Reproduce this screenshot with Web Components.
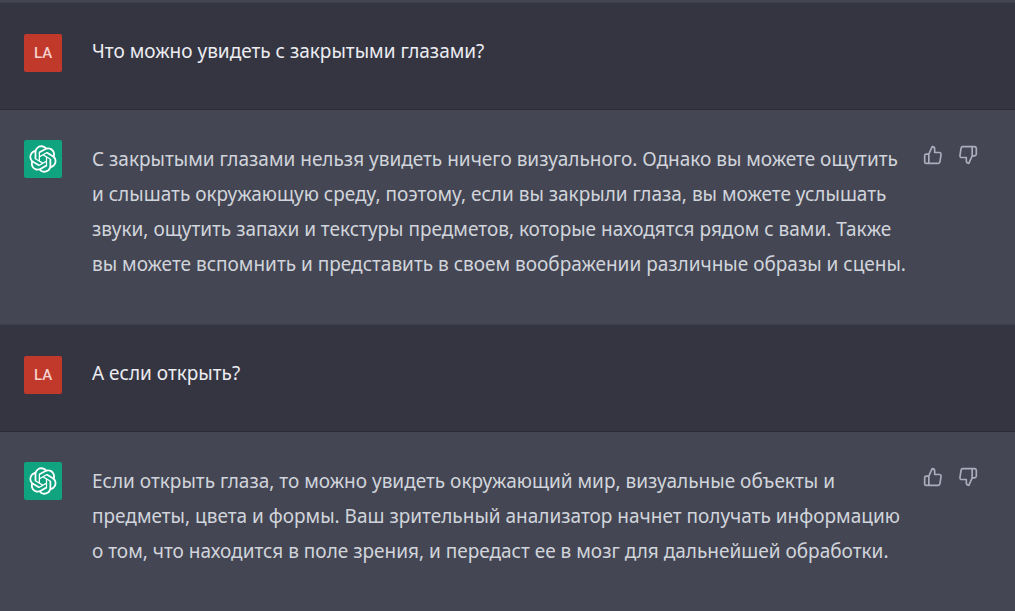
<!DOCTYPE html>
<html lang="ru">
<head>
<meta charset="utf-8">
<meta name="viewport" content="width=device-width, initial-scale=1">
<title>Чат</title>
<style>
  html {
    background: #444654;
  }
  body {
    margin: 0;
    font-family: "Noto Sans", "Open Sans", sans-serif;
    font-size: 19px;
    line-height: 35px;
  }
</style>
</head>
<body>
<chat-thread>
  <chat-message role="user" initials="LA">Что можно увидеть с закрытыми глазами?</chat-message>
  <chat-message role="assistant">С закрытыми глазами нельзя увидеть ничего визуального. Однако вы можете ощутить и слышать окружающую среду, поэтому, если вы закрыли глаза, вы можете услышать звуки, ощутить запахи и текстуры предметов, которые находятся рядом с вами. Также вы можете вспомнить и представить в своем воображении различные образы и сцены.</chat-message>
  <chat-message role="user" initials="LA">А если открыть?</chat-message>
  <chat-message role="assistant">Если открыть глаза, то можно увидеть окружающий мир, визуальные объекты и предметы, цвета и формы. Ваш зрительный анализатор начнет получать информацию о том, что находится в поле зрения, и передаст ее в мозг для дальнейшей обработки.</chat-message>
</chat-thread>

<script>
/**
 * <chat-thread> — message list. The strip on top is the end of the previous reply.
 */
class ChatThread extends HTMLElement {
  constructor() {
    super();
    this.attachShadow({ mode: "open" }).innerHTML = `
      <style>
        :host {
          display: block;
          border-top: 2px solid #444654;
        }
        main { display: block; }
      </style>
      <main><slot></slot></main>
    `;
  }
}

/**
 * <chat-avatar> — square avatar.
 *
 * Attributes:
 *   initials  Letters to show. Without them the assistant logo is drawn.
 */
class ChatAvatar extends HTMLElement {
  connectedCallback() {
    const initials = this.getAttribute("initials");
    const root = this.shadowRoot ?? this.attachShadow({ mode: "open" });

    root.innerHTML = `
      <style>
        :host {
          display: flex;
          flex: none;
          align-items: center;
          justify-content: center;
          width: 38px;
          height: 38px;
          border-radius: 2px;
          background: ${initials ? "#c0392b" : "#10a37f"};
          color: ${initials ? "#f6d0cc" : "#fff"};
          font: 500 15px/38px Roboto, "Noto Sans", sans-serif;
        }
        svg { display: block; width: 28px; height: 28px; }
      </style>
      ${initials ? `<span>${initials}</span>` : `
      <svg viewBox="0 0 41 41" fill="currentColor" aria-hidden="true">
        <path d="M37.5324 16.8707C37.9808 15.5241 38.1363 14.0974 37.9886 12.6859C37.8409 11.2744 37.3934 9.91076 36.676 8.68622C35.6126 6.83404 33.9882 5.3676 32.0373 4.4985C30.0864 3.62941 27.9098 3.40259 25.8215 3.85078C24.8796 2.7893 23.7219 1.94125 22.4257 1.36341C21.1295 0.785575 19.7249 0.491269 18.3058 0.500197C16.1708 0.495044 14.0893 1.16803 12.3614 2.42214C10.6335 3.67624 9.34853 5.44666 8.6917 7.47815C7.30085 7.76286 5.98686 8.3414 4.8377 9.17505C3.68854 10.0087 2.73073 11.0782 2.02839 12.312C0.956464 14.1591 0.498905 16.2988 0.721698 18.4228C0.944492 20.5467 1.83612 22.5449 3.268 24.1293C2.81966 25.4759 2.66413 26.9026 2.81182 28.3141C2.95951 29.7256 3.40701 31.0892 4.12437 32.3138C5.18791 34.1659 6.8123 35.6322 8.76321 36.5013C10.7141 37.3704 12.8907 37.5973 14.9789 37.1492C15.9208 38.2107 17.0786 39.0587 18.3747 39.6366C19.6709 40.2144 21.0755 40.5087 22.4946 40.4998C24.6307 40.5054 26.7133 39.8321 28.4418 38.5772C30.1704 37.3223 31.4556 35.5506 32.1119 33.5179C33.5027 33.2332 34.8167 32.6547 35.9659 31.821C37.115 30.9874 38.0728 29.9178 38.7752 28.684C39.8458 26.8371 40.3023 24.6979 40.0789 22.5748C39.8556 20.4517 38.9639 18.4544 37.5324 16.8707ZM22.4978 37.8849C20.7443 37.8874 19.0459 37.2733 17.6994 36.1501C17.7601 36.117 17.8666 36.0586 17.936 36.0161L25.9004 31.4156C26.1003 31.3019 26.2663 31.137 26.3813 30.9378C26.4964 30.7386 26.5563 30.5124 26.5549 30.2825V19.0542L29.9213 20.998C29.9389 21.0068 29.9541 21.0198 29.9656 21.0359C29.977 21.052 29.9842 21.0707 29.9867 21.0902V30.3889C29.9842 32.375 29.1946 34.2791 27.7909 35.6841C26.3872 37.0892 24.4838 37.8806 22.4978 37.8849ZM6.39227 31.0064C5.51397 29.4888 5.19742 27.7107 5.49804 25.9832C5.55718 26.0187 5.66048 26.0818 5.73461 26.1244L13.699 30.7248C13.8975 30.8408 14.1233 30.902 14.3532 30.902C14.583 30.902 14.8088 30.8408 15.0073 30.7248L24.731 25.1103V28.9979C24.7321 29.0177 24.7283 29.0376 24.7199 29.0556C24.7115 29.0736 24.6988 29.0893 24.6829 29.1012L16.6317 33.7497C14.9096 34.7416 12.8643 35.0097 10.9447 34.4954C9.02506 33.9811 7.38785 32.7263 6.39227 31.0064ZM4.29707 13.6194C5.17156 12.0998 6.55279 10.9364 8.19885 10.3327C8.19885 10.4013 8.19491 10.5228 8.19491 10.6071V19.808C8.19351 20.0378 8.25334 20.2638 8.36823 20.4629C8.48312 20.6619 8.64893 20.8267 8.84863 20.9404L18.5723 26.5542L15.206 28.4979C15.1894 28.5089 15.1703 28.5155 15.1505 28.5173C15.1307 28.5191 15.1107 28.516 15.0924 28.5082L7.04046 23.8557C5.32135 22.8601 4.06716 21.2235 3.55289 19.3046C3.03862 17.3858 3.30624 15.3413 4.29707 13.6194ZM31.955 20.0556L22.2312 14.4411L25.5976 12.4981C25.6142 12.4872 25.6333 12.4805 25.6531 12.4787C25.6729 12.4769 25.6928 12.4801 25.7111 12.4879L33.7631 17.1364C34.9967 17.849 36.0017 18.8982 36.6606 20.1613C37.3194 21.4244 37.6047 22.849 37.4832 24.2684C37.3617 25.6878 36.8382 27.0432 35.9743 28.1759C35.1103 29.3086 33.9415 30.1717 32.6047 30.6641C32.6047 30.5947 32.6047 30.4733 32.6047 30.3889V21.188C32.6066 20.9586 32.5474 20.7328 32.4332 20.5338C32.319 20.3348 32.154 20.1698 31.955 20.0556ZM35.3055 15.0128C35.2464 14.9765 35.1431 14.9142 35.069 14.8717L27.1045 10.2712C26.906 10.1554 26.6803 10.0943 26.4504 10.0943C26.2206 10.0943 25.9948 10.1554 25.7963 10.2712L16.0726 15.8858V11.9982C16.0715 11.9783 16.0753 11.9585 16.0837 11.9405C16.0921 11.9225 16.1048 11.9068 16.1207 11.8949L24.1719 7.25025C25.4053 6.53903 26.8158 6.19376 28.2383 6.25482C29.6608 6.31589 31.0364 6.78077 32.2044 7.59508C33.3723 8.40939 34.2842 9.53945 34.8334 10.8531C35.3826 12.1667 35.5464 13.6095 35.3055 15.0128ZM14.2424 21.9419L10.8752 19.9981C10.8576 19.9893 10.8423 19.9763 10.8309 19.9602C10.8195 19.9441 10.8122 19.9254 10.8098 19.9058V10.6071C10.8107 9.18295 11.2173 7.78848 11.9819 6.58696C12.7466 5.38544 13.8377 4.42659 15.1275 3.82264C16.4173 3.21869 17.8524 2.99464 19.2649 3.1767C20.6775 3.35876 22.0089 3.93941 23.1034 4.85067C23.0427 4.88379 22.937 4.94215 22.8668 4.98473L14.9024 9.58517C14.7025 9.69878 14.5366 9.86356 14.4215 10.0626C14.3065 10.2616 14.2466 10.4877 14.2479 10.7175L14.2424 21.9419ZM16.071 17.9991L20.4018 15.4978L24.7325 17.9975V22.9985L20.4018 25.4983L16.071 22.9985V17.9991Z"/>
      </svg>`}
    `;
  }
}

/**
 * <chat-feedback> — thumbs up / thumbs down buttons.
 */
class ChatFeedback extends HTMLElement {
  constructor() {
    super();
    this.attachShadow({ mode: "open" }).innerHTML = `
      <style>
        :host {
          display: flex;
          flex: none;
          gap: 5px;
        }
        button {
          display: block;
          padding: 5px;
          border: 0;
          border-radius: 6px;
          background: none;
          color: #acacbe;
          cursor: pointer;
        }
        button:hover { background: #343541; }
        svg {
          display: block;
          width: 20px;
          height: 20px;
          fill: none;
          stroke: currentColor;
          stroke-width: 2;
          stroke-linecap: round;
          stroke-linejoin: round;
        }
      </style>
      <button type="button" aria-label="Нравится">
        <svg viewBox="0 0 24 24" aria-hidden="true">
          <path d="M14 9V5a3 3 0 0 0-3-3l-4 9v11h11.28a2 2 0 0 0 2-1.7l1.38-9a2 2 0 0 0-2-2.3zM7 22H4a2 2 0 0 1-2-2v-7a2 2 0 0 1 2-2h3"/>
        </svg>
      </button>
      <button type="button" aria-label="Не нравится">
        <svg viewBox="0 0 24 24" aria-hidden="true">
          <path d="M10 15v4a3 3 0 0 0 3 3l4-9V2H5.72a2 2 0 0 0-2 1.7l-1.38 9a2 2 0 0 0 2 2.3zm7-13h2.67A2.31 2.31 0 0 1 22 4v7a2.31 2.31 0 0 1-2.33 2H17"/>
        </svg>
      </button>
    `;
  }
}

/**
 * <chat-message> — one row of the conversation.
 *
 * Attributes:
 *   role      "user" | "assistant"
 *   initials  Letters for the user's avatar.
 *
 * Slots:
 *   (default)  Message text.
 */
class ChatMessage extends HTMLElement {
  connectedCallback() {
    const isUser = this.getAttribute("role") === "user";
    const initials = this.getAttribute("initials") ?? "";
    const root = this.shadowRoot ?? this.attachShadow({ mode: "open" });

    root.innerHTML = `
      <style>
        :host { display: block; }
        article {
          display: flex;
          align-items: flex-start;
          padding: 30px 32px 38px 24px;
          background: #343541;
          color: #ececf1;
        }
        article.user {
          padding-top: 31px;
          padding-bottom: 37px;
          border-top: 1px solid #3e404d;
          border-bottom: 1px solid #2b2c36;
        }
        article.assistant {
          background: #444654;
          color: #d1d5db;
        }
        .text {
          flex: 1;
          min-width: 0;
          margin: 0 10px 0 30px;
        }
        .assistant .text { padding: 2px 0 4px; }
      </style>
      <article class="${isUser ? "user" : "assistant"}">
        <chat-avatar ${isUser ? `initials="${initials}"` : ""}></chat-avatar>
        <p class="text"><slot></slot></p>
        ${isUser ? "" : "<chat-feedback></chat-feedback>"}
      </article>
    `;
  }
}

customElements.define("chat-avatar", ChatAvatar);
customElements.define("chat-feedback", ChatFeedback);
customElements.define("chat-message", ChatMessage);
customElements.define("chat-thread", ChatThread);
</script>
</body>
</html>
